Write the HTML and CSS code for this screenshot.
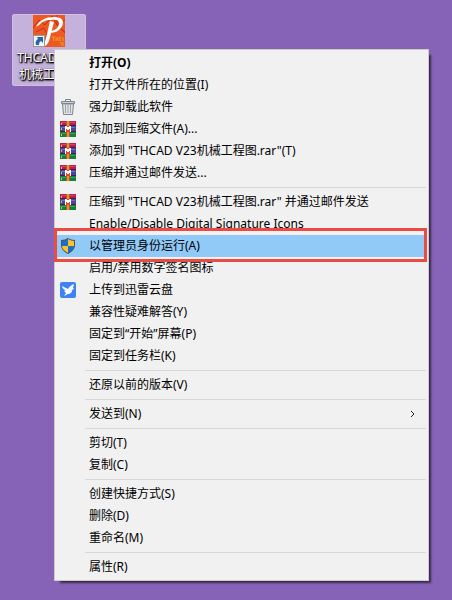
FILE: index.html
```html
<!DOCTYPE html>
<html lang="zh-CN">
<head>
    <meta charset="UTF-8">
    <meta name="viewport" content="width=device-width, initial-scale=1.0">
    <title>THCAD V23</title>
    <link rel="stylesheet" href="styles.css">
</head>
<body>
    <!-- Shared icons -->
    <svg class="sprite" aria-hidden="true">
        <symbol id="rar" viewBox="0 0 16 16">
            <path fill="#b81f4c" d="M0 0h16v5H0z"/>
            <path fill="#e0416f" d="M1 1h14v1H1z"/>
            <path fill="#4646a0" d="M0 5h16v6H0z"/>
            <path fill="#7070c8" d="M1 6h14v1H1z"/>
            <path fill="#14803c" d="M0 11h16v5H0z"/>
            <path fill="#35a558" d="M1 12h14v1H1z"/>
            <path fill="#4a1c38" d="M0 4h16v1H0zM0 10h16v1H0z"/>
            <path fill="#e9b43a" d="M1 2h1v2H1zM1 7h1v2H1zM1 13h1v2H1z"/>
            <path fill="#b5532a" d="M6 0h4v16H6z"/>
            <path fill="#f0902c" d="M7 0h2v5H7zM7 11h2v5H7z"/>
            <path fill="#fff" d="M5 5h1l2 1 2-1h1v6h-1V8H9v2H7V8H6v3H5z"/>
            <path fill="#e8432a" d="M6 8h1v3H6zM9 8h1v3H9zM7 5h2v1H7zM7 9h2v2H7z"/>
        </symbol>
    </svg>

    <a class="shortcut" href="#">
        <svg class="shortcut-icon" viewBox="0 0 32 32" aria-hidden="true">
            <path fill="#eb5a20" d="M0 0h32v32H0z"/>
            <path fill="none" stroke="#d3281c" d="M0 13l6-8 6 5 7-9 5 9 8-5M20 18l6-6 6 5M3 17l8-4 4 8M24 0v10l8 8"/>
            <path fill="none" stroke="#f39a25" d="M19 22h3M20.500 22v4M23 22v4M23 24h2M25 22v4M28 22h-1v4h1M30 22v4M27 28h4M28 30h3"/>
            <path fill="#fff" d="M3 12C6 5 13 2 21 2c6 0 9 2 9 6-1 6-6 10-13 10l1-2c5-1 8-4 8-8 0-3-3-4-8-3-6 0-9 2-12 5z"/>
            <path fill="#fff" d="M17 6l4 1-5 19c-1 2-2 4-4 5h-2c3-4 5-17 7-25z"/>
            <path fill="#f5f5f5" stroke="#999" d="M.5 20.500h11v11H.5z"/>
            <path fill="#2467ad" d="M4 22h6v6l-2-2c-2 1-2 3-2 4H3c-1-3 0-5 2-6z"/>
        </svg>
        <span class="shortcut-name">THCAD V23<br>机械工程图</span>
    </a>

    <ul class="menu">
        <li><button class="item default">打开(O)</button></li>
        <li><button class="item">打开文件所在的位置(I)</button></li>
        <li><button class="item">
            <svg class="icon" viewBox="0 0 16 16" aria-hidden="true">
                <path fill="#e2e4e7" stroke="#7d868f" d="M2.500 5h11l-1 10.500h-9z"/>
                <path fill="none" stroke="#9aa2aa" d="M5.500 6v8M8 6v8M10.500 6v8"/>
                <path fill="#cfd4d9" stroke="#7d868f" d="M1.500 2.500h13v2h-13z"/>
                <path fill="none" stroke="#7d868f" d="M5.500 2V.5h5V2"/>
            </svg>强力卸载此软件</button></li>
        <li><button class="item"><svg class="icon" aria-hidden="true"><use href="#rar"/></svg>添加到压缩文件(A)...</button></li>
        <li><button class="item"><svg class="icon" aria-hidden="true"><use href="#rar"/></svg>添加到 "THCAD V23机械工程图.rar"(T)</button></li>
        <li><button class="item"><svg class="icon" aria-hidden="true"><use href="#rar"/></svg>压缩并通过邮件发送...</button></li>
        <li class="separator"></li>
        <li><button class="item"><svg class="icon" aria-hidden="true"><use href="#rar"/></svg>压缩到 "THCAD V23机械工程图.rar" 并通过邮件发送</button></li>
        <li><button class="item">Enable/Disable Digital Signature Icons</button></li>
        <li><button class="item selected">
            <svg class="icon" viewBox="0 0 16 16" aria-hidden="true">
                <path fill="#4b5560" d="M8 0c2 1 4 2 7 2v5c0 4-3 7-7 9-4-2-7-5-7-9V2c3 0 5-1 7-2z"/>
                <path fill="#1b6fc9" d="M8 1v7H2V3c2 0 4-1 6-2z"/>
                <path fill="#fcc42c" d="M8 1c2 1 4 2 6 2v5H8z"/>
                <path fill="#fcc42c" d="M2 8h6v7c-3-2-6-4-6-7z"/>
                <path fill="#1b6fc9" d="M8 8h6c0 3-3 5-6 7z"/>
            </svg>以管理员身份运行(A)</button></li>
        <li><button class="item">启用/禁用数字签名图标</button></li>
        <li><button class="item">
            <svg class="icon" viewBox="0 0 16 16" aria-hidden="true">
                <rect width="16" height="16" rx="2" fill="#3d83f7"/>
                <path fill="#fff" d="M2 4l6 3c1-2 3-4 6-5l-1 4 1 1-2 1c0 2-1 4-4 4l-4 2 2-3-2-2 2-1C4 8 2 6 2 4z"/>
            </svg>上传到迅雷云盘</button></li>
        <li><button class="item">兼容性疑难解答(Y)</button></li>
        <li><button class="item">固定到“开始”屏幕(P)</button></li>
        <li><button class="item">固定到任务栏(K)</button></li>
        <li class="separator"></li>
        <li><button class="item">还原以前的版本(V)</button></li>
        <li class="separator"></li>
        <li><button class="item">发送到(N)
            <svg class="arrow" viewBox="0 0 6 8" aria-hidden="true"><path d="M1 1l3 3-3 3"/></svg></button></li>
        <li class="separator"></li>
        <li><button class="item">剪切(T)</button></li>
        <li><button class="item">复制(C)</button></li>
        <li class="separator"></li>
        <li><button class="item">创建快捷方式(S)</button></li>
        <li><button class="item">删除(D)</button></li>
        <li><button class="item">重命名(M)</button></li>
        <li class="separator"></li>
        <li><button class="item">属性(R)</button></li>
    </ul>
</body>
</html>
```

FILE: styles.css
```css
body {
    margin: 0;
    min-height: 100vh;
    position: relative;
    background-color: #8763b7;
    font-family: "Noto Sans", "Noto Sans CJK SC", sans-serif;
    font-size: 12px;
}
.sprite {
    position: absolute;
    width: 0;
    height: 0;
}

/* Desktop shortcut */
.shortcut {
    position: absolute;
    left: 12px;
    top: 14px;
    box-sizing: border-box;
    width: 74px;
    border: 1px solid #d0c0e2;
    border-radius: 2px;
    background-color: #c4b2dc;
    color: white;
    text-align: center;
    text-decoration: none;
    text-shadow: 1px 1px 2px black, 0 1px 2px black, 1px 1px 1px black;
}
.shortcut-icon {
    display: block;
    width: 32px;
    height: 32px;
    margin: 0 auto 2px;
}
.shortcut-name {
    display: block;
    padding-bottom: 2px;
    line-height: 17px;
    white-space: nowrap;
}

/* Context menu */
.menu {
    position: absolute;
    left: 54px;
    right: 23px;
    top: 49px;
    margin: 0;
    padding: 2px;
    list-style: none;
    border: 1px solid #ccc;
    background-color: #f1f1f1;
    box-shadow: 4px 4px 2px -2px rgba(0, 0, 0, 0.6);
}
.item {
    position: relative;
    display: flex;
    align-items: center;
    width: 100%;
    height: 22px;
    padding: 0 10px 0 32px;
    border: none;
    background: none;
    color: black;
    font: inherit;
    line-height: 22px;
    text-align: left;
    white-space: nowrap;
}
.item:hover, .selected {
    background-color: #91c9f7;
}
.default {
    font-weight: bold;
}
.icon {
    width: 16px;
    height: 16px;
    margin-left: -29px;
    margin-right: 13px;
}
.arrow {
    width: 6px;
    height: 8px;
    margin-left: auto;
    fill: none;
    stroke: #222;
}
.separator {
    height: 1px;
    margin: 3px 0 3px 28px;
    background-color: #d7d7d7;
}

/* Red frame around the highlighted command */
.selected::after {
    content: "";
    position: absolute;
    z-index: 1;
    inset: -7px -1px -5px -3px;
    border: 3px solid #eb4b42;
}
```
